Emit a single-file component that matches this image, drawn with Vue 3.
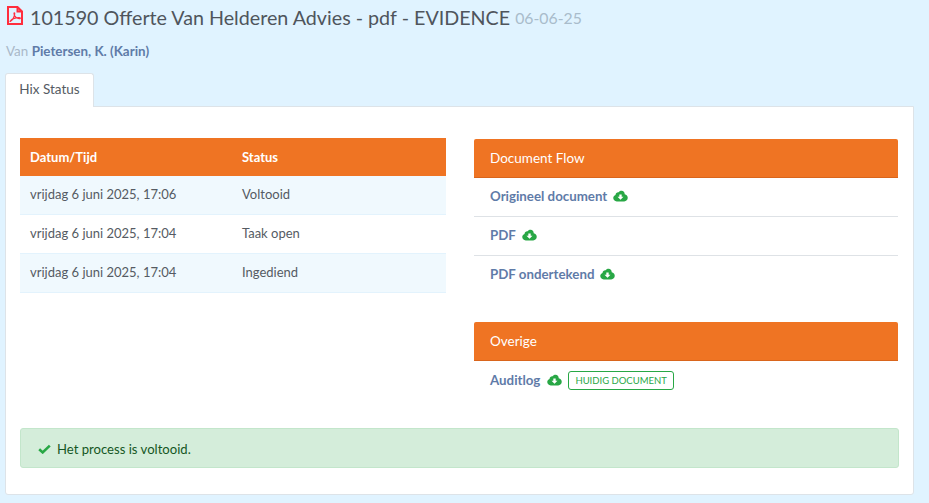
<script setup>
const rows = [
  { date: 'vrijdag 6 juni 2025, 17:06', status: 'Voltooid' },
  { date: 'vrijdag 6 juni 2025, 17:04', status: 'Taak open' },
  { date: 'vrijdag 6 juni 2025, 17:04', status: 'Ingediend' },
]
const flowDocs = ['Origineel document', 'PDF', 'PDF ondertekend']
const cloudPath = 'M4.5 13.5C2 13.5 0.3 11.7 0.3 9.5C0.3 7.7 1.4 6.2 3 5.7C3.2 3.7 4.9 2.3 6.8 2.6C7.7 1.2 9 0.6 10.4 0.8C12.5 1 14 2.7 14.1 4.8C16.2 5.2 17.7 7 17.7 9.2C17.7 11.6 15.8 13.5 13.5 13.5ZM7.6 5.2V8H5.4L9 11.6L12.6 8H10.4V5.2Z'
</script>

<template>
  <div class="page">
    <h1 class="title">
      <svg class="pdf-icon" width="16" height="19" viewBox="0 0 16 19">
        <path d="M1 1H10.5L15 5.5V18H1Z M10.5 1V5.5H15" fill="none" stroke="#ff2d3d" stroke-width="2"/>
        <path d="M3.2 15.4C5.5 14 7.4 10.6 7.7 7.6C7.8 6.6 7 6.6 7 7.6C7 10.4 10 13 12.9 12.6C13.6 12.4 13.4 11.7 12.6 11.7C9.6 11.6 5.6 12.6 3.5 14.6C3 15.1 3 15.6 3.2 15.4Z" fill="none" stroke="#ff2d3d" stroke-width="1.2"/>
      </svg>
      <span>101590 Offerte Van Helderen Advies - pdf - EVIDENCE</span>
      <small>06-06-25</small>
    </h1>
    <p class="from">Van <strong>Pietersen, K. (Karin)</strong></p>

    <div class="tabs">
      <div class="tab">Hix Status</div>
    </div>

    <div class="panel">
      <div class="columns">
        <table class="status-table">
          <thead>
            <tr>
              <th class="date-col">Datum/Tijd</th>
              <th>Status</th>
            </tr>
          </thead>
          <tbody>
            <tr v-for="(row, i) in rows" :key="i">
              <td>{{ row.date }}</td>
              <td>{{ row.status }}</td>
            </tr>
          </tbody>
        </table>

        <div class="side">
          <div class="card">
            <div class="card-head">Document Flow</div>
            <div v-for="doc in flowDocs" :key="doc" class="doc-row">
              <a class="doc-link">{{ doc }}</a>
              <svg class="cloud" width="15" height="12" viewBox="0 0 18 14"><path :d="cloudPath" fill="#28a745" fill-rule="evenodd"/></svg>
            </div>
          </div>

          <div class="card other">
            <div class="card-head">Overige</div>
            <div class="doc-row last">
              <a class="doc-link">Auditlog</a>
              <svg class="cloud" width="15" height="12" viewBox="0 0 18 14"><path :d="cloudPath" fill="#28a745" fill-rule="evenodd"/></svg>
              <span class="badge">HUIDIG DOCUMENT</span>
            </div>
          </div>
        </div>
      </div>

      <div class="alert">
        <svg width="13" height="10" viewBox="0 0 13 10"><path d="M1.2 5.2L4.7 8.4L11.8 1.6" fill="none" stroke="#28a745" stroke-width="2.6"/></svg>
        <span>Het process is voltooid.</span>
      </div>
    </div>
  </div>
</template>

<style>
html, body {
  background: #e0f3ff;
}
</style>

<style scoped>
.page {
  height: 503px;
  box-sizing: border-box;
  padding: 0 15px 0 5px;
  background: #e0f3ff;
  font-family: Lato, "Open Sans", sans-serif;
  font-size: 14px;
  color: #555b63;
  overflow: hidden;
}

.title {
  display: flex;
  align-items: center;
  margin: 0;
  padding: 2px 0 0 2px;
  height: 30px;
  font-size: 19.7px;
  font-weight: 400;
  color: #4f555c;
}

.pdf-icon {
  margin-right: 7px;
  margin-bottom: 4px;
}

.title small {
  margin-left: 5px;
  font-size: 15.8px;
  color: #a9bccb;
}

.from {
  margin: 11px 0 0 1px;
  height: 17px;
  line-height: 17px;
  font-size: 13.4px;
  color: #a9b8c8;
}

.from strong {
  color: #5f7ba8;
}

.tabs {
  display: flex;
  margin-top: 13px;
}

.tab {
  height: 34px;
  width: 89px;
  box-sizing: border-box;
  margin-bottom: -1px;
  position: relative;
  text-align: center;
  line-height: 30px;
  background: #fff;
  border: 1px solid #dde3e8;
  border-bottom: 0;
  border-radius: 3px 3px 0 0;
  font-size: 13.5px;
}

.panel {
  height: 389px;
  box-sizing: border-box;
  padding: 31px 14px 0;
  background: #fff;
  border: 1px solid #dde3e8;
  border-radius: 0 0 3px 3px;
}

.columns {
  display: grid;
  grid-template-columns: 426px 424px;
  column-gap: 28px;
  height: 290px;
}

.status-table {
  align-self: start;
  width: 100%;
  border-collapse: collapse;
  font-size: 13px;
}

.status-table th {
  height: 38px;
  padding: 0 10px;
  text-align: left;
  background: #ef7423;
  color: #fff;
  font-weight: 700;
}

.status-table .date-col {
  width: 192px;
}

.status-table td {
  height: 38.7px;
  box-sizing: border-box;
  padding: 0 10px 2px;
  border-bottom: 1px solid #e3f3fd;
}

.status-table tbody tr:nth-child(odd) {
  background: #f0f9fe;
}

.side {
  padding-top: 1px;
}

.card-head {
  height: 38px;
  line-height: 38px;
  padding-left: 16px;
  background: #ef7423;
  border-bottom: 1px solid #d9651c;
  border-radius: 2px 2px 0 0;
  color: #fff;
  font-size: 13.5px;
}

.doc-row {
  display: flex;
  align-items: center;
  height: 36px;
  padding: 0 0 2px 16px;
  border-bottom: 1px solid #dee2e6;
}

.doc-row:last-child {
  border-bottom: 0;
}

.doc-row.last {
  height: 38px;
  padding-bottom: 0;
}

.doc-link {
  color: #5f7ba8;
  font-size: 13.3px;
  font-weight: 700;
}

.cloud {
  margin-left: 6px;
}

.last .cloud {
  margin-left: 7px;
}

.badge {
  margin-left: 6px;
  height: 19px;
  box-sizing: border-box;
  padding: 0 6px;
  line-height: 17px;
  border: 1px solid #28a745;
  border-radius: 3px;
  color: #28a745;
  font-size: 9.5px;
}

.other {
  margin-top: 28px;
}

.alert {
  display: flex;
  align-items: center;
  gap: 6px;
  height: 40px;
  box-sizing: border-box;
  padding: 1px 0 0 17px;
  background: #d4edda;
  border: 1px solid #c3e6cb;
  border-radius: 3px;
  color: #155724;
  font-size: 13.1px;
}
</style>
